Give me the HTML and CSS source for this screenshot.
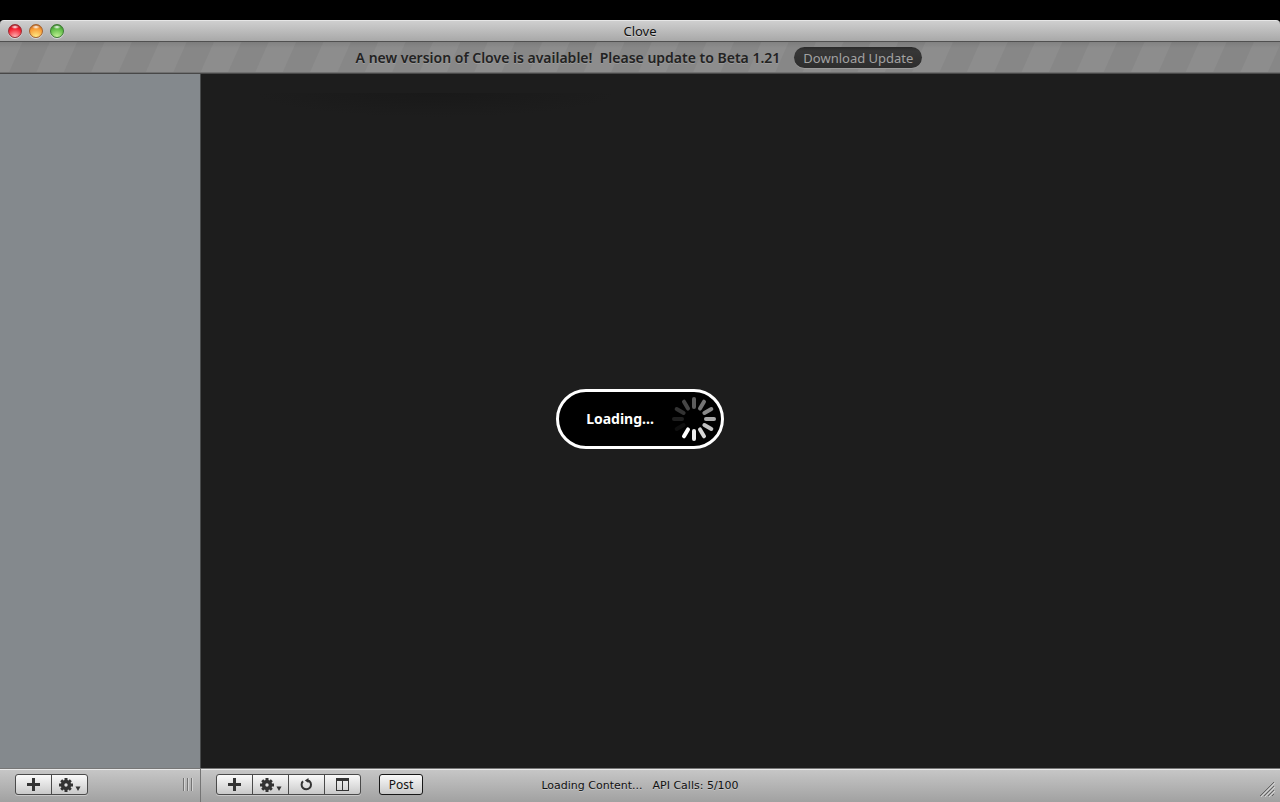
FILE: index.html
```
<!DOCTYPE html>
<html lang="en">
<head>
<meta charset="utf-8">
<title>Clove</title>
<link rel="stylesheet" href="styles.css">
</head>
<body>
<svg class="symbols" aria-hidden="true">
  <symbol id="plus" viewBox="0 0 13 13"><path d="M5 0h3v5h5v3H8v5H5V8H0V5h5z"/></symbol>
  <symbol id="gear" viewBox="0 0 22 14">
    <path fill-rule="evenodd" d="M5.500 0h3v2l1 .4 1.300-1.200 2 2L11.600 4.500l.4 1h2v3h-2l-.4 1 1.200 1.300-2 2L9.500 11.600l-1 .4v2h-3v-2l-1-.4-1.300 1.200-2-2L2.400 9.500l-.4-1H0v-3h2l.4-1L1.200 3.200l2-2L4.500 2.400l1-.4zM7 5.300a1.700 1.700 0 1 0 0 3.400a1.700 1.700 0 1 0 0-3.400z"/>
    <path d="M16.500 8.500h5L19 13z"/>
  </symbol>
  <symbol id="reload" viewBox="0 0 13 13">
    <path d="M3 3.300A4.700 4.700 0 1 0 9.500 3.200L7.500 2.500" fill="none" stroke="currentColor" stroke-width="2"/>
    <path d="M8.500 0v5L4.800 2.500z"/>
  </symbol>
  <symbol id="panes" viewBox="0 0 13 13">
    <path fill-rule="evenodd" d="M0 0h13v13H0zM1 3v9h5V3zM7 3v9h5V3z"/>
  </symbol>
</svg>
<div class="window">
  <header class="titlebar">
    <div class="lights">
      <button class="light red" aria-label="Close"></button>
      <button class="light amber" aria-label="Minimize"></button>
      <button class="light green" aria-label="Zoom"></button>
    </div>
    <h1 class="title">Clove</h1>
  </header>
  <div class="banner">
    <span class="notice">A new version of Clove is available!&nbsp; Please update to Beta 1.21</span>
    <button class="download">Download Update</button>
  </div>
  <main class="body">
    <aside class="sidebar"></aside>
    <section class="content"></section>
    <div class="overlay">
      <div class="loading" role="status">
        <span>Loading...</span>
        <svg class="spinner" viewBox="-22 -22 44 44" stroke="#fff" stroke-width="4" stroke-linecap="round" aria-hidden="true">
          <path d="M0-12V-20" stroke-opacity=".36"/>
          <path d="M0-12V-20" transform="rotate(30)" stroke-opacity=".46"/>
          <path d="M0-12V-20" transform="rotate(60)" stroke-opacity=".54"/>
          <path d="M0-12V-20" transform="rotate(90)" stroke-opacity=".66"/>
          <path d="M0-12V-20" transform="rotate(120)" stroke-opacity=".76"/>
          <path d="M0-12V-20" transform="rotate(150)" stroke-opacity=".84"/>
          <path d="M0-12V-20" transform="rotate(180)" stroke-opacity=".93"/>
          <path d="M0-12V-20" transform="rotate(210)"/>
          <path d="M0-12V-20" transform="rotate(240)" stroke-opacity=".06"/>
          <path d="M0-12V-20" transform="rotate(270)" stroke-opacity=".12"/>
          <path d="M0-12V-20" transform="rotate(300)" stroke-opacity=".2"/>
          <path d="M0-12V-20" transform="rotate(330)" stroke-opacity=".28"/>
        </svg>
      </div>
    </div>
  </main>
  <footer class="toolbar">
    <div class="tools">
      <div class="side-tools">
        <div class="group">
          <button class="tool" aria-label="Add account"><svg class="icon"><use href="#plus"/></svg></button>
          <button class="tool" aria-label="Account actions"><svg class="icon gear"><use href="#gear"/></svg></button>
        </div>
        <svg class="grip" viewBox="0 0 10 13" aria-hidden="true"><path d="M.5 0v13M4.500 0v13M8.500 0v13" stroke="#737373"/><path d="M1.500 0v13M5.500 0v13M9.500 0v13" stroke="#d2d2d2"/></svg>
      </div>
      <div class="main-tools">
        <div class="group">
          <button class="tool" aria-label="Add column"><svg class="icon"><use href="#plus"/></svg></button>
          <button class="tool" aria-label="Column actions"><svg class="icon gear"><use href="#gear"/></svg></button>
          <button class="tool" aria-label="Reload"><svg class="icon"><use href="#reload"/></svg></button>
          <button class="tool" aria-label="Layout"><svg class="icon"><use href="#panes"/></svg></button>
        </div>
        <button class="post">Post</button>
      </div>
    </div>
    <div class="status"><span>Loading Content...</span><span>API Calls: 5/100</span></div>
    <svg class="resize" viewBox="0 0 16 16" aria-hidden="true"><path d="M1 15L15 1M5 15L15 5M9 15L15 9M13 15L15 13" stroke="#646464"/><path d="M2 16L16 2M6 16L16 6M10 16L16 10" stroke="#d4d4d4"/></svg>
  </footer>
</div>
</body>
</html>
```
FILE: styles.css
```
* { box-sizing: border-box; }

body {
  margin: 0;
  background: #000;
  color: #111;
  font: 13px/16px "Noto Sans", "Open Sans", sans-serif;
}

button {
  margin: 0;
  padding: 0;
  border: 0;
  font: inherit;
  color: inherit;
}

.symbols {
  position: absolute;
  width: 0;
  height: 0;
}

.window {
  display: flex;
  flex-direction: column;
  min-height: 100vh;
  padding-top: 20px;
}

.titlebar {
  display: grid;
  grid-template-columns: 1fr auto 1fr;
  align-items: center;
  height: 22px;
  padding: 0 8px;
  border-top: 1px solid #e6e6e6;
  border-bottom: 1px solid #505050;
  border-radius: 4px 4px 0 0;
  background: linear-gradient(#cfcfcf, #a8a8a8);
}

.title {
  margin: 0;
  font-size: 13px;
  font-weight: 400;
  text-shadow: 0 1px 0 #d0d0d0;
}

.lights {
  display: flex;
  gap: 7px;
}

.light {
  width: 14px;
  height: 14px;
  border-radius: 50%;
  box-shadow: 0 1px 0 #d8d8d8;
}

.red {
  border: 1px solid #9a2d33;
  background: radial-gradient(ellipse 4px 2px at 50% 2px, #fff, transparent), radial-gradient(circle at 50% 100%, #ffb9b9, #f41c2c 65%, #8c1018);
}

.amber {
  border: 1px solid #a5622c;
  background: radial-gradient(ellipse 4px 2px at 50% 2px, #fff, transparent), radial-gradient(circle at 50% 100%, #fff08a, #f89a34 65%, #9c4610);
}

.green {
  border: 1px solid #3d7c34;
  background: radial-gradient(ellipse 4px 2px at 50% 2px, #fff, transparent), radial-gradient(circle at 50% 100%, #c8f59a, #5cba44 65%, #26681c);
}

.banner {
  display: flex;
  justify-content: center;
  align-items: center;
  gap: 14px;
  height: 32px;
  padding-right: 2px;
  border-bottom: 1px solid #484848;
  background:
    linear-gradient(rgba(0, 0, 0, .08), transparent 6px),
    linear-gradient(transparent 30px, #707070 30px),
    repeating-linear-gradient(114deg, #8d8d8d 0 20px, #878787 21px 45px, #8d8d8d 46px 50px);
}

.notice {
  color: #222;
  font-size: 14px;
  font-weight: 600;
  text-shadow: 0 1px 0 #9c9c9c;
}

.download {
  height: 21px;
  padding: 0 9px;
  border-radius: 11px;
  background: linear-gradient(#292929, #373737 4px, #2d2d2d);
  box-shadow: 0 1px 0 #9a9a9a;
  color: #a2a2a2;
}

.body {
  position: relative;
  display: grid;
  grid-template-columns: 201px 1fr;
  flex: 1;
}

.sidebar {
  border-right: 1px solid #484a4b;
  background: #84898d;
}

.content {
  background:
    radial-gradient(ellipse 180px 24px at 235px 0, #191919, transparent) 0 19px no-repeat,
    #1d1d1d;
}

.overlay {
  position: absolute;
  inset: 0;
  display: flex;
  justify-content: center;
  align-items: center;
  padding-bottom: 4px;
}

.loading {
  display: flex;
  align-items: center;
  gap: 18px;
  height: 60px;
  padding: 0 5px 0 27px;
  border: 3px solid #fff;
  border-radius: 30px;
  background: #000;
  color: #fff;
  font-size: 14px;
  font-weight: 700;
}

.spinner {
  width: 44px;
  height: 44px;
}

.toolbar {
  display: grid;
  grid-template-columns: 1fr auto 1fr;
  height: 34px;
  border-top: 1px solid #777;
  background: linear-gradient(#e9e9e9 1px, #c6c6c6 1px, #a1a1a1);
}

.tools,
.side-tools,
.main-tools {
  display: flex;
}

.side-tools {
  justify-content: space-between;
  width: 201px;
  padding: 5px 7px 0 15px;
  border-right: 1px solid #747474;
}

.main-tools {
  gap: 18px;
  padding: 5px 0 0 15px;
}

.group {
  display: flex;
  height: 21px;
  border: 1px solid #4a4a4a;
  border-radius: 3px;
  background: linear-gradient(#fafafa, #c9c9c9);
  box-shadow: 0 1px 0 #c8c8c8;
}

.tool {
  display: flex;
  justify-content: center;
  align-items: center;
  width: 36px;
  background: none;
  color: #333;
}

.tool:first-child {
  width: 35px;
}

.tool + .tool {
  border-left: 1px solid #4a4a4a;
}

.icon {
  width: 13px;
  height: 13px;
  fill: currentColor;
}

.gear {
  width: 22px;
  height: 14px;
}

.post {
  width: 44px;
  height: 21px;
  border: 1px solid #181818;
  border-radius: 3px;
  background: linear-gradient(#fafafa, #c9c9c9);
  font-size: 12px;
  line-height: 18px;
}

.grip {
  width: 10px;
  height: 13px;
  margin-top: 4px;
}

.status {
  display: flex;
  align-items: center;
  gap: 10px;
  padding-top: 1px;
  font-family: "DejaVu Sans", sans-serif;
  font-size: 11px;
  text-shadow: 0 1px 0 #c8c8c8;
}

.resize {
  justify-self: end;
  align-self: end;
  width: 16px;
  height: 16px;
  margin: 0 5px 5px 0;
}
```
